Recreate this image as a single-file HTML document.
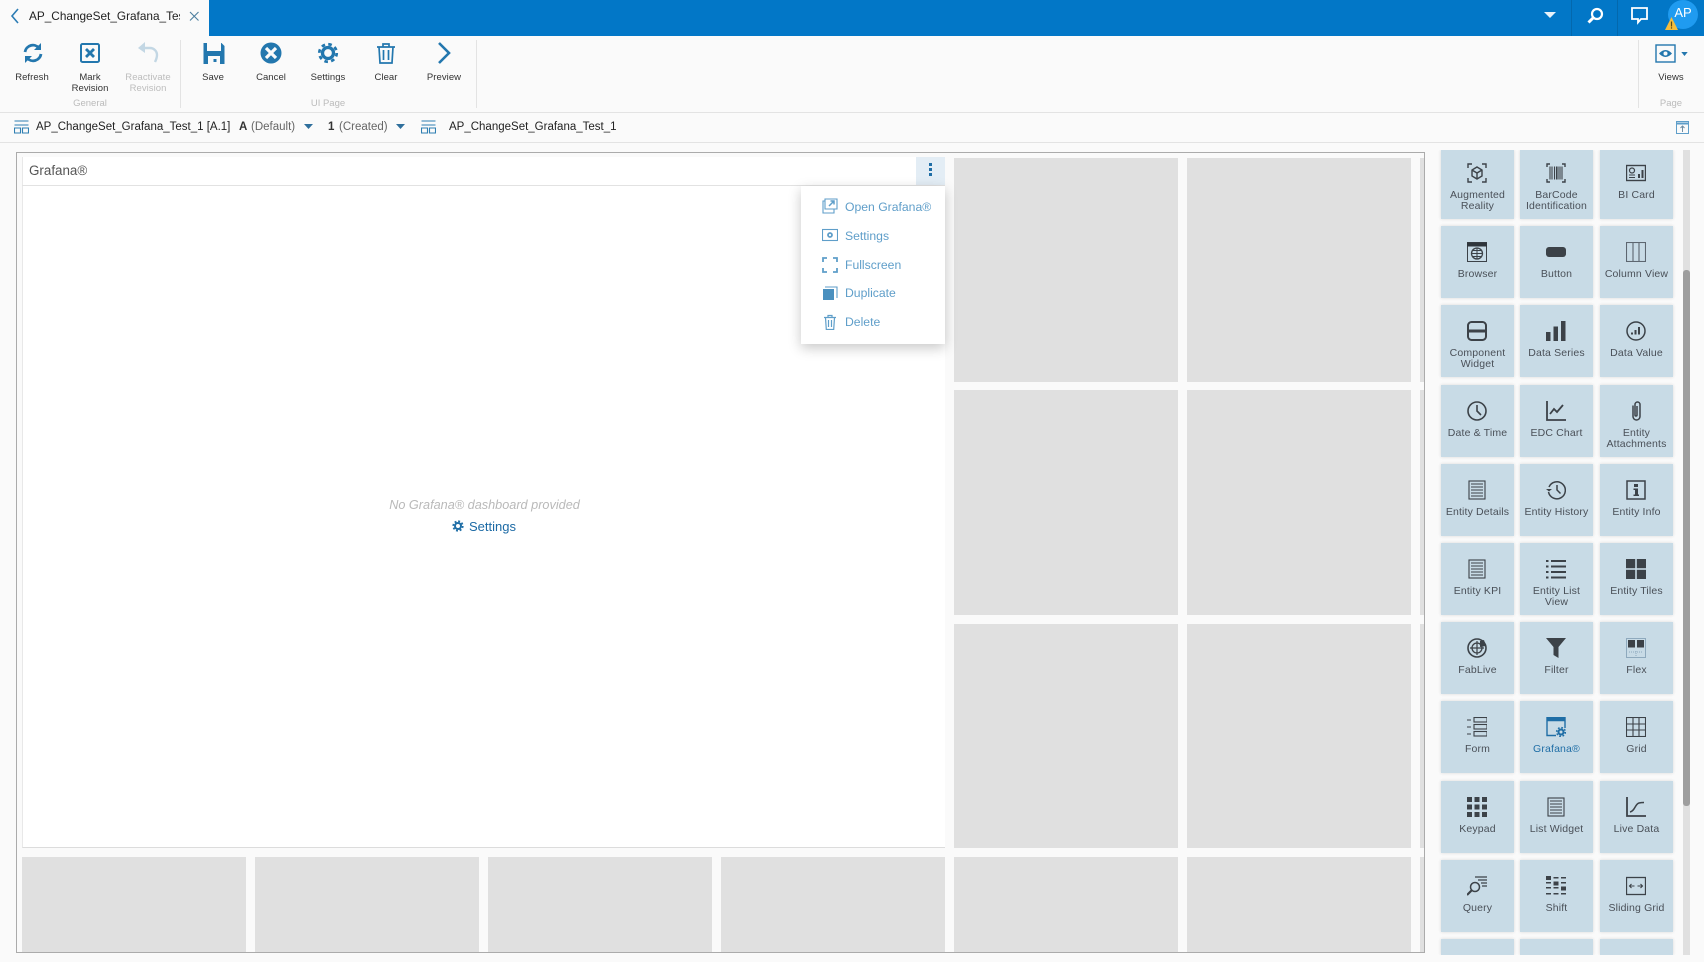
<!DOCTYPE html>
<html><head><meta charset="utf-8"><title>Grafana</title>
<style>
html,body{margin:0;padding:0;width:1704px;height:962px;overflow:hidden;background:#fafafa;font-family:"Liberation Sans",sans-serif;color:#333}
div,span,svg{position:absolute;box-sizing:border-box}
.rb{text-align:center;font-size:9.5px;line-height:11px;color:#333;width:70px;letter-spacing:.05px}
.rg{text-align:center;font-size:9.5px;color:#bbb;width:70px;top:98px;line-height:12px}
.ic{width:24px;height:24px;top:41px}
.g{background:#e0e0e0}
.t{width:73px;height:72px;background:#c8dbe6;box-shadow:0 0 3px rgba(0,0,0,.14)}
.t svg{left:26px;top:16px;width:20px;height:20px;fill:none;stroke:#3c4248;stroke-width:1.4}
.t span{left:0;width:73px;top:42.500px;text-align:center;font-size:10.500px;line-height:11.500px;color:#4a5058;letter-spacing:.15px}
.m{left:845px;font-size:12.200px;color:#5f9ec9;line-height:16px;white-space:nowrap}
.mi{left:822px;width:16px;height:16px;fill:none;stroke:#5f9ec9;stroke-width:1.1}
.f{fill:#3c4248;stroke:none}
.bc{top:118.500px;font-size:11.500px;line-height:17px;white-space:nowrap;color:#222}
</style></head><body>
<!-- top bar -->
<div style="left:0;top:0;width:1704px;height:36px;background:#0277c7"></div>
<div style="left:0;top:0;width:209px;height:36px;background:#fafafa"></div>
<svg style="left:9px;top:6px;width:12px;height:20px" viewBox="0 0 12 20" fill="none" stroke="#2c7cb4" stroke-width="1.6"><path d="M9 3 3 10l6 7"/></svg>
<div style="left:29px;top:6px;width:151px;height:20px;overflow:hidden;font-size:11.800px;line-height:20px;white-space:nowrap;color:#222">AP_ChangeSet_Grafana_Test_1</div>
<svg style="left:188px;top:10px;width:12px;height:12px" viewBox="0 0 12 12" fill="none" stroke="#4d7f9f" stroke-width="1.1"><path d="M2 2l8.500 8.500M10.500 2 2 10.500"/></svg>
<svg style="left:1544px;top:11px;width:12px;height:8px" viewBox="0 0 12 8"><path d="M0 1h12L6 7z" fill="#e8f2fa"/></svg>
<div style="left:1571px;top:0;width:1px;height:36px;background:#0368ad"></div>
<div style="left:1617px;top:0;width:1px;height:36px;background:#0368ad"></div>
<svg style="left:1584px;top:5px;width:22px;height:22px" viewBox="0 0 22 22" fill="none" stroke="#fff"><circle cx="13" cy="9" r="5" stroke-width="2.200"/><path d="M9.500 12.500l-5 5" stroke-width="3"/></svg>
<svg style="left:1630px;top:6px;width:20px;height:19px" viewBox="0 0 20 19" fill="none" stroke="#fff" stroke-width="1.800"><path d="M2 2h15v11h-6l-3 3.500V13H2z"/></svg>
<div style="left:1668px;top:0;width:30px;height:29px;border-radius:50%;background:#1f9bf0;color:#fff;font-size:13px;line-height:26px;text-align:center">AP</div>
<svg style="left:1665px;top:17px;width:13px;height:13px" viewBox="0 0 13 13"><path d="M6.500 0 13 13H0z" fill="#f4bd3c"/><path d="M6.500 4.500v5M6.500 10.300v1.300" stroke="#5a4a1c" stroke-width="1.200"/></svg>

<!-- ribbon -->
<div style="left:0;top:112px;width:1704px;height:1px;background:#e3e3e3"></div>
<div style="left:0;top:142px;width:1704px;height:1px;background:#e3e3e3"></div>
<div style="left:180px;top:40px;width:1px;height:68px;background:#e3e3e3"></div>
<div style="left:476px;top:40px;width:1px;height:68px;background:#e3e3e3"></div>
<div style="left:1638px;top:40px;width:1px;height:68px;background:#e3e3e3"></div>

<svg class="ic" style="left:21px" viewBox="0 0 24 24" fill="none" stroke="#2377ae" stroke-width="2.800"><path d="M4 11a8 8 0 0 1 14-4"/><path d="M20 13a8 8 0 0 1-14 4"/><path d="M20 2v7h-7z" fill="#2377ae" stroke="none"/><path d="M4 22v-7h7z" fill="#2377ae" stroke="none"/></svg>
<svg class="ic" style="left:78px" viewBox="0 0 24 24" fill="none" stroke="#2377ae"><rect x="3" y="3" width="18" height="18" rx="1.500" stroke-width="2"/><path d="M8 8l8 8M16 8l-8 8" stroke-width="2.800"/></svg>
<svg class="ic" style="left:136px" viewBox="0 0 24 24" fill="none" stroke="#c3d7e4" stroke-width="2.400"><path d="M5 7h9a7 7 0 0 1 7 7c0 3-1 5-2 7"/><path d="M2 7l7-6v11z" fill="#c3d7e4" stroke="none"/></svg>
<svg class="ic" style="left:202px" viewBox="0 0 24 24"><path d="M1.500 2h18l3 3v18h-21z" fill="#2377ae"/><rect x="5" y="2" width="14" height="8" fill="#fafafa"/><rect x="6" y="15" width="12" height="8" fill="#fafafa"/><rect x="11.500" y="18" width="3" height="3" fill="#2377ae"/></svg>
<svg class="ic" style="left:259px" viewBox="0 0 24 24"><circle cx="12" cy="12" r="10.500" fill="#2377ae"/><path d="M7 7l10 10M17 7 7 17" stroke="#fafafa" stroke-width="3.200"/></svg>
<svg class="ic" style="left:317px;width:22px;height:22px;top:42px" viewBox="0 0 24 24" fill="none" stroke="#2377ae"><circle cx="12" cy="12" r="6" stroke-width="3.600"/><circle cx="12" cy="12" r="9.500" stroke-width="3" stroke-dasharray="3.900 3.560"/></svg>
<svg class="ic" style="left:374px" viewBox="0 0 24 24" fill="none" stroke="#2377ae" stroke-width="1.700"><path d="M3 6h18M9 6V3h6v3M5 6l1 16h12l1-16M9.500 9v10M14.500 9v10"/></svg>
<svg class="ic" style="left:432px" viewBox="0 0 24 24" fill="none" stroke="#2377ae" stroke-width="2.600"><path d="M7 2l10 10L7 22"/></svg>

<div class="rb" style="left:-3px;top:72px">Refresh</div>
<div class="rb" style="left:55px;top:72px">Mark<br>Revision</div>
<div class="rb" style="left:113px;top:72px;color:#bdbdbd">Reactivate<br>Revision</div>
<div class="rb" style="left:178px;top:72px">Save</div>
<div class="rb" style="left:236px;top:72px">Cancel</div>
<div class="rb" style="left:293px;top:72px">Settings</div>
<div class="rb" style="left:351px;top:72px">Clear</div>
<div class="rb" style="left:409px;top:72px">Preview</div>
<div class="rb" style="left:1636px;top:72px">Views</div>
<div class="rg" style="left:55px">General</div>
<div class="rg" style="left:293px">UI Page</div>
<div class="rg" style="left:1636px">Page</div>
<svg style="left:1655px;top:44px;width:22px;height:20px" viewBox="0 0 22 20" fill="none" stroke="#2377ae"><rect x="1" y="1" width="19" height="17" stroke-width="1.400"/><path d="M4 9.500q6.500-7 13 0q-6.500 7-13 0z" fill="#2377ae" stroke="none"/><circle cx="10.500" cy="9.500" r="2" fill="#fafafa" stroke="none"/></svg>
<svg style="left:1681px;top:52px;width:7px;height:4px" viewBox="0 0 8 5"><path d="M0 0h8L4 5z" fill="#2377ae"/></svg>

<!-- breadcrumb -->
<svg style="left:14px;top:120px;width:15px;height:14px" viewBox="0 0 15 14" fill="none" stroke="#2f7fb2" stroke-width="1.100"><path d="M.5 1h14M.5 5h14M.5 8h6v5h-6zM8.500 8h6v5h-6z"/></svg>
<div class="bc" style="left:36px">AP_ChangeSet_Grafana_Test_1 [A.1]</div>
<div class="bc" style="left:239px"><b style="color:#333">A</b></div>
<div class="bc" style="left:251px;color:#666">(Default)</div>
<svg style="left:304px;top:124px;width:9px;height:5px" viewBox="0 0 9 5"><path d="M0 0h9L4.500 5z" fill="#2f6f9c"/></svg>
<div class="bc" style="left:328px"><b style="color:#333">1</b></div>
<div class="bc" style="left:339px;color:#666">(Created)</div>
<svg style="left:396px;top:124px;width:9px;height:5px" viewBox="0 0 9 5"><path d="M0 0h9L4.500 5z" fill="#2f6f9c"/></svg>
<svg style="left:421px;top:120px;width:15px;height:14px" viewBox="0 0 15 14" fill="none" stroke="#2f7fb2" stroke-width="1.100"><path d="M.5 1h14M.5 5h14M.5 8h6v5h-6zM8.500 8h6v5h-6z"/></svg>
<div class="bc" style="left:449px">AP_ChangeSet_Grafana_Test_1</div>
<svg style="left:1676px;top:121px;width:13px;height:13px" viewBox="0 0 13 13" fill="none" stroke="#5f9ec9"><rect x=".5" y=".5" width="12" height="12"/><path d="M1 2.500h11" stroke-width="2"/><path d="M6.500 11V5M4.500 7l2-2 2 2" stroke="#6f8ea5"/></svg>

<!-- canvas -->
<div style="left:16px;top:152px;width:1409px;height:801px;border:1px solid #ababab;background:#fafafa"></div>
<div class="g" style="left:954px;top:157.500px;width:224px;height:224px"></div>
<div class="g" style="left:1187px;top:157.500px;width:224px;height:224px"></div>
<div class="g" style="left:1420px;top:157.500px;width:4px;height:224px"></div>
<div class="g" style="left:954px;top:390px;width:224px;height:225px"></div>
<div class="g" style="left:1187px;top:390px;width:224px;height:225px"></div>
<div class="g" style="left:1420px;top:390px;width:4px;height:225px"></div>
<div class="g" style="left:954px;top:624px;width:224px;height:224px"></div>
<div class="g" style="left:1187px;top:624px;width:224px;height:224px"></div>
<div class="g" style="left:1420px;top:624px;width:4px;height:224px"></div>
<div class="g" style="left:21.500px;top:857px;width:224px;height:95px"></div>
<div class="g" style="left:254.500px;top:857px;width:224px;height:95px"></div>
<div class="g" style="left:488px;top:857px;width:224px;height:95px"></div>
<div class="g" style="left:721px;top:857px;width:224px;height:95px"></div>
<div class="g" style="left:954px;top:857px;width:224px;height:95px"></div>
<div class="g" style="left:1187px;top:857px;width:224px;height:95px"></div>
<div class="g" style="left:1420px;top:857px;width:4px;height:95px"></div>

<!-- widget -->
<div style="left:21.500px;top:157px;width:923.500px;height:691px;background:#fff;border-bottom:1px solid #dcdcdc;border-left:1px solid #e8e8e8"></div>
<div style="left:22px;top:185px;width:923px;height:1px;background:#e2e2e2"></div>
<div style="left:29px;top:161.500px;font-size:13.400px;line-height:18px;color:#555">Grafana®</div>
<div style="left:916px;top:157px;width:29px;height:28px;background:#e3edf5"></div>
<svg style="left:928px;top:163px;width:5px;height:13px" viewBox="0 0 5 13"><path d="M1 0h3v3H1zM1 5h3v3H1zM1 10h3v3H1z" fill="#1f6ea6"/></svg>
<div style="left:388px;top:495.500px;width:193px;font-size:12.700px;line-height:18px;font-style:italic;color:#b9b9b9;white-space:nowrap;text-align:center">No Grafana® dashboard provided</div>
<svg style="left:452px;top:520px;width:12px;height:12px" viewBox="0 0 24 24" fill="none" stroke="#1f6ea6"><circle cx="12" cy="12" r="6" stroke-width="4"/><circle cx="12" cy="12" r="9.500" stroke-width="3.500" stroke-dasharray="3.900 3.560"/></svg>
<div style="left:469px;top:517.500px;font-size:13px;line-height:18px;color:#1c6aa5">Settings</div>

<!-- context menu -->
<div style="left:801px;top:186px;width:144px;height:158px;background:#fff;box-shadow:0 4px 12px rgba(0,0,0,.22)"></div>
<svg class="mi" style="top:198px" viewBox="0 0 16 16"><path d="M3 1h12v10H3z"/><path d="M3 3H1v12h11v-4"/><path d="M7 8l5-5M8.500 3H12v3.500" stroke-width="1.500"/></svg>
<svg class="mi" style="top:227px" viewBox="0 0 16 16"><rect x=".5" y="2.500" width="15" height="11"/><circle cx="8" cy="8" r="2" stroke-width="1.800"/></svg>
<svg class="mi" style="top:257px;stroke-width:1.800" viewBox="0 0 16 16"><path d="M1 5V1h4M11 1h4v4M15 11v4h-4M5 15H1v-4"/></svg>
<svg class="mi" style="top:285px" viewBox="0 0 16 16"><rect x="1" y="4" width="11" height="11" fill="#4a90bf" stroke="none"/><path d="M3 2h12v11"/></svg>
<svg class="mi" style="top:314px;stroke-width:1.200" viewBox="0 0 16 16"><path d="M2 3.500h12M6 3.500V1.500h4v2M3.500 3.500l.8 12h7.400l.8-12M6.500 6v7M9.500 6v7"/></svg>
<div class="m" style="top:198.500px">Open Grafana®</div>
<div class="m" style="top:227.500px">Settings</div>
<div class="m" style="top:256.500px">Fullscreen</div>
<div class="m" style="top:284.500px">Duplicate</div>
<div class="m" style="top:313.500px">Delete</div>

<!-- palette -->
<div style="left:1436px;top:150px;width:245px;height:805px;overflow:hidden">
<div class="t" style="left:5px;top:0;height:69px"><svg viewBox="0 0 20 20" style="top:13px"><path d="M1 5V1h4M15 1h4v4M19 15v4h-4M5 19H1v-4"/><path d="M10 4l5 3v6l-5 3-5-3V7zM5 7l5 3 5-3M10 10v6"/></svg><span style="top:39.500px">Augmented<br>Reality</span></div>
<div class="t" style="left:84px;top:0;height:69px"><svg viewBox="0 0 20 20" style="top:13px"><path d="M1 4V1h3M16 1h3v3M19 16v3h-3M4 19H1v-3"/><path d="M4 3.500v13M6 3.500v13M8.500 3.500v13M10.500 3.500v13M12 3.500v13M14 3.500v13M16 3.500v13" stroke-width="1.100"/></svg><span style="top:39.500px">BarCode<br>Identification</span></div>
<div class="t" style="left:164px;top:0;height:69px"><svg viewBox="0 0 20 20" style="top:13px"><rect x=".5" y="2.500" width="19" height="15"/><circle cx="6" cy="7.500" r="2.500" stroke-width="1.200"/><path d="M3 12h6M3 14.500h6" stroke-width="1"/><path d="M13 15v-4M16.500 15V7" stroke-width="2"/></svg><span style="top:39.500px">BI Card</span></div>

<div class="t" style="left:5px;top:76px"><svg viewBox="0 0 20 20"><rect x=".5" y=".5" width="19" height="19" stroke-width="1"/><path d="M0 2.500h20" stroke-width="4" stroke="#30363c"/><circle cx="10" cy="11.500" r="5.500" stroke-width="1.300"/><path d="M10 6v11M4.500 11.500h11M6 8.500h8M6 14.500h8" stroke-width="1"/></svg><span>Browser</span></div>
<div class="t" style="left:84px;top:76px"><svg viewBox="0 0 20 20"><rect class="f" x="0" y="5" width="20" height="10" rx="3"/></svg><span>Button</span></div>
<div class="t" style="left:164px;top:76px"><svg viewBox="0 0 20 20" style="stroke:#5d6670;stroke-width:1.100"><rect x=".5" y=".5" width="19" height="19"/><path d="M7 .5v19M13 .5v19"/></svg><span>Column View</span></div>

<div class="t" style="left:5px;top:155px"><svg viewBox="0 0 20 20" style="stroke-width:2"><rect x="1" y="1" width="18" height="18" rx="3.500"/><path d="M1 10h18" stroke-width="3"/></svg><span>Component<br>Widget</span></div>
<div class="t" style="left:84px;top:155px"><svg viewBox="0 0 20 20"><rect class="f" x="0" y="11" width="4.500" height="9"/><rect class="f" x="7.500" y="5.500" width="4.500" height="14.500"/><rect class="f" x="15" y="0" width="4.500" height="20"/></svg><span>Data Series</span></div>
<div class="t" style="left:164px;top:155px"><svg viewBox="0 0 20 20"><circle cx="10" cy="10" r="9" stroke-width="1.500"/><rect class="f" x="5" y="11.500" width="2" height="2"/><rect class="f" x="8.500" y="9" width="2" height="4.500"/><rect class="f" x="12" y="6" width="2" height="7.500"/></svg><span>Data Value</span></div>

<div class="t" style="left:5px;top:235px"><svg viewBox="0 0 20 20"><circle cx="10" cy="10" r="9" stroke-width="1.600"/><path d="M10 4v6l4 4" stroke-width="1.600"/></svg><span>Date &amp; Time</span></div>
<div class="t" style="left:84px;top:235px"><svg viewBox="0 0 20 20" style="stroke-width:1.800"><path d="M1 0v19h19"/><path d="M4 13l4-5 3 3 6-7"/></svg><span>EDC Chart</span></div>
<div class="t" style="left:164px;top:235px"><svg viewBox="0 0 20 20" style="stroke-width:1.500"><path d="M7 4.500v11a3.500 3.500 0 0 0 7 0V3.500a2.500 2.500 0 0 0-5 0V14a1 1 0 0 0 2 0V5"/></svg><span>Entity<br>Attachments</span></div>

<div class="t" style="left:5px;top:314px"><svg viewBox="0 0 20 20" style="stroke-width:1.100"><rect x="2" y="1" width="16" height="18"/><path d="M4 4h12M4 7h12M4 10h12M4 13h12M4 16h12"/></svg><span>Entity Details</span></div>
<div class="t" style="left:84px;top:314px"><svg viewBox="0 0 20 20" style="stroke-width:1.500"><path d="M3 7a8.500 8.500 0 1 1-.5 5"/><path class="f" d="M0 9l3 2.500L6 9z"/><path d="M11 5v5l3.500 3.500"/></svg><span>Entity History</span></div>
<div class="t" style="left:164px;top:314px"><svg viewBox="0 0 20 20"><rect x="1" y="1" width="18" height="18" stroke-width="1.500"/><path class="f" d="M8 4h4v3H8zM7.500 8.500H12v6h1v1.500H7.500v-1.500h1.500v-4.500H7.500z"/></svg><span>Entity Info</span></div>

<div class="t" style="left:5px;top:393px"><svg viewBox="0 0 20 20" style="stroke-width:1.100"><rect x="2" y="1" width="16" height="18"/><path d="M4 4h12M4 7h12M4 10h12M4 13h12M4 16h12"/></svg><span>Entity KPI</span></div>
<div class="t" style="left:84px;top:393px"><svg viewBox="0 0 20 20" style="stroke-width:2"><path d="M5 2h15M5 7.500h15M5 13h15M5 18.500h15"/><path d="M0 2h2.500M0 7.500h2.500M0 13h2.500M0 18.500h2.500"/></svg><span>Entity List<br>View</span></div>
<div class="t" style="left:164px;top:393px"><svg viewBox="0 0 20 20"><rect class="f" x="0" y="0" width="9.200" height="9.200"/><rect class="f" x="10.800" y="0" width="9.200" height="9.200"/><rect class="f" x="0" y="10.800" width="9.200" height="9.200"/><rect class="f" x="10.800" y="10.800" width="9.200" height="9.200"/></svg><span>Entity Tiles</span></div>

<div class="t" style="left:5px;top:472px"><svg viewBox="0 0 20 20"><circle cx="10" cy="10" r="9" stroke-width="1.600"/><circle cx="10" cy="10" r="5" stroke-width="1.300"/><path d="M10 3v14M3 10h14" stroke-width="1.200"/><path class="f" d="M13 3l4-1 2 6-6 1z"/></svg><span>FabLive</span></div>
<div class="t" style="left:84px;top:472px"><svg viewBox="0 0 20 20"><path class="f" d="M0 0h20l-7.500 9v11l-5-3V9z"/></svg><span>Filter</span></div>
<div class="t" style="left:164px;top:472px"><svg viewBox="0 0 20 20" style="stroke:#8ea9bd;stroke-width:1"><rect x=".5" y=".5" width="19" height="19"/><path d="M10 13v6M3 14h14" stroke-dasharray="1 1"/><rect class="f" x="2" y="2" width="7" height="7.500"/><rect class="f" x="11" y="2" width="7" height="7.500"/></svg><span>Flex</span></div>

<div class="t" style="left:5px;top:551px"><svg viewBox="0 0 20 20" style="stroke-width:1.100"><path d="M0 3h4M0 10h4M0 17h4"/><rect x="7" y=".5" width="13" height="4.500"/><rect x="7" y="7.500" width="13" height="4.500"/><rect x="7" y="14.500" width="13" height="4.500"/></svg><span>Form</span></div>
<div class="t" style="left:84px;top:551px"><svg viewBox="0 0 20 20" style="stroke:#1f6ea6"><path d="M19 11V.5H1v18h9"/><path d="M1 2.500h18" stroke-width="3.500"/><circle cx="15" cy="15" r="2.500" stroke-width="2"/><circle cx="15" cy="15" r="4.300" stroke-width="1.600" stroke-dasharray="1.700 1.700"/></svg><span style="color:#1f6ea6">Grafana®</span></div>
<div class="t" style="left:164px;top:551px"><svg viewBox="0 0 20 20" style="stroke-width:1.100"><rect x=".5" y=".5" width="19" height="19"/><path d="M7 .5v19M13 .5v19M.5 7h19M.5 13h19"/></svg><span>Grid</span></div>

<div class="t" style="left:5px;top:631px"><svg viewBox="0 0 20 20"><rect class="f" x="0" y="0" width="5" height="5"/><rect class="f" x="7.500" y="0" width="5" height="5"/><rect class="f" x="15" y="0" width="5" height="5"/><rect class="f" x="0" y="7.500" width="5" height="5"/><rect class="f" x="7.500" y="7.500" width="5" height="5"/><rect class="f" x="15" y="7.500" width="5" height="5"/><rect class="f" x="0" y="15" width="5" height="5"/><rect class="f" x="7.500" y="15" width="5" height="5"/><rect class="f" x="15" y="15" width="5" height="5"/></svg><span>Keypad</span></div>
<div class="t" style="left:84px;top:631px"><svg viewBox="0 0 20 20" style="stroke-width:1.100"><rect x="2" y="1" width="16" height="18"/><path d="M4 4h12M4 7h12M4 10h12M4 13h12M4 16h12"/></svg><span>List Widget</span></div>
<div class="t" style="left:164px;top:631px"><svg viewBox="0 0 20 20" style="stroke-width:1.800"><path d="M1 0v19h19"/><path d="M4 15c5-1 5-8 9-9 2-.5 4-.5 5-.5" stroke-width="1.500"/></svg><span>Live Data</span></div>

<div class="t" style="left:5px;top:710px"><svg viewBox="0 0 20 20"><circle cx="8" cy="11" r="4.500" stroke-width="1.500"/><path d="M4.500 14.500 0 19" stroke-width="2.200"/><path d="M8 1h12M11 4h9M14 7h6M15 10h5" stroke-width="1.200"/></svg><span>Query</span></div>
<div class="t" style="left:84px;top:710px"><svg viewBox="0 0 20 20"><g class="f"><rect x="0" y="0" width="5" height="4"/><rect x="7.500" y="1" width="5" height="1.500"/><rect x="15" y="1" width="5" height="1.500"/><rect x="0" y="6" width="5" height="1.500"/><rect x="7.500" y="5.500" width="5" height="4"/><rect x="15" y="6" width="5" height="1.500"/><rect x="0" y="11" width="5" height="1.500"/><rect x="7.500" y="11" width="5" height="1.500"/><rect x="15" y="10.500" width="5" height="4"/><rect x="0" y="17" width="5" height="1.500"/><rect x="7.500" y="17" width="5" height="1.500"/><rect x="15" y="17" width="5" height="1.500"/></g></svg><span>Shift</span></div>
<div class="t" style="left:164px;top:710px"><svg viewBox="0 0 20 20"><rect x=".5" y="1.500" width="19" height="17" stroke-width="1.300"/><path d="M3.500 10h5M5.500 8l-2 2 2 2M11.500 10h5M14.500 8l2 2-2 2" stroke-width="1.100"/></svg><span>Sliding Grid</span></div>

<div class="t" style="left:5px;top:789px;height:16px"></div>
<div class="t" style="left:84px;top:789px;height:16px"></div>
<div class="t" style="left:164px;top:789px;height:16px"></div>
</div>

<!-- scrollbar -->
<div style="left:1683px;top:150px;width:7px;height:805px;background:#e0e0e0"></div>
<div style="left:1683px;top:270px;width:7px;height:536px;background:#9e9e9e;border-radius:3px"></div>
</body></html>
